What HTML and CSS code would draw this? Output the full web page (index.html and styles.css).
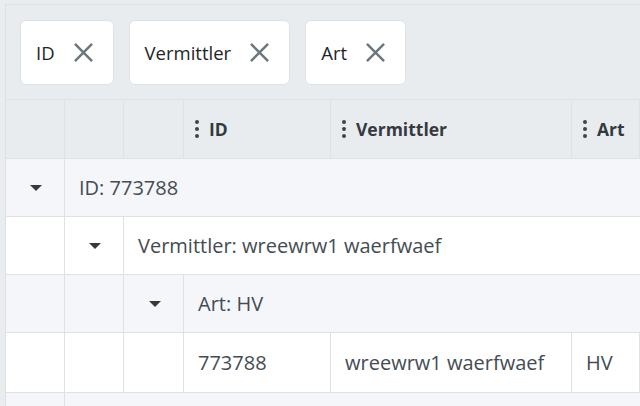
FILE: index.html
```
<!DOCTYPE html>
<html lang="en">
<head>
    <meta charset="UTF-8">
    <meta name="viewport" content="width=device-width, initial-scale=1.0">
    <title>Grid</title>
    <link rel="stylesheet" href="styles.css">
</head>
<body>

<div class="grid-wrap">
    <!-- group panel -->
    <div class="group-panel">
        <div class="chip">
            <span>ID</span>
            <svg class="chip-x" viewBox="0 0 20 20"><path d="M1 1 L19 19 M19 1 L1 19"/></svg>
        </div>
        <div class="chip">
            <span>Vermittler</span>
            <svg class="chip-x" viewBox="0 0 20 20"><path d="M1 1 L19 19 M19 1 L1 19"/></svg>
        </div>
        <div class="chip">
            <span>Art</span>
            <svg class="chip-x" viewBox="0 0 20 20"><path d="M1 1 L19 19 M19 1 L1 19"/></svg>
        </div>
    </div>

    <!-- header -->
    <div class="row header">
        <div class="cell"></div>
        <div class="cell"></div>
        <div class="cell"></div>
        <div class="cell"><span class="dots"><i></i><i></i><i></i></span>ID</div>
        <div class="cell"><span class="dots"><i></i><i></i><i></i></span>Vermittler</div>
        <div class="cell"><span class="dots"><i></i><i></i><i></i></span>Art</div>
    </div>

    <div class="row shade">
        <div class="cell toggle"><span class="caret"></span></div>
        <div class="cell span-5">ID: 773788</div>
    </div>

    <div class="row">
        <div class="cell"></div>
        <div class="cell toggle"><span class="caret"></span></div>
        <div class="cell span-4">Vermittler: wreewrw1 waerfwaef</div>
    </div>

    <div class="row shade">
        <div class="cell"></div>
        <div class="cell"></div>
        <div class="cell toggle"><span class="caret"></span></div>
        <div class="cell span-3">Art: HV</div>
    </div>

    <div class="row data">
        <div class="cell"></div>
        <div class="cell"></div>
        <div class="cell"></div>
        <div class="cell">773788</div>
        <div class="cell">wreewrw1 waerfwaef</div>
        <div class="cell">HV</div>
    </div>

    <div class="row shade">
        <div class="cell"></div>
        <div class="cell span-5"></div>
    </div>
</div>

</body>
</html>
```

FILE: styles.css
```
body {
    margin: 0;
    background-color: #eaedf0;
    font-family: 'Open Sans', 'Noto Sans', sans-serif;
    color: #434c53;
    overflow: hidden;
}

.grid-wrap {
    margin: 4px 0 0 5px;
    border-top: 1px solid #dde1e5;
    border-left: 1px solid #dde1e5;
    box-shadow: inset 1px 1px 0 #fff;
    height: 420px;
    background-color: #fff;
}

.group-panel {
    display: flex;
    gap: 15px;
    padding: 15px 14px 14px 14px;
    background-color: #e9ecef;
    border-bottom: 1px solid #dee2e6;
}

.chip {
    display: flex;
    align-items: center;
    height: 65px;
    box-sizing: border-box;
    padding: 0 20px 0 15px;
    gap: 19px;
    background-color: #fff;
    border: 1px solid #dee2e6;
    border-radius: 6px;
    font-size: 18.5px;
    color: #212529;
}

.chip-x {
    width: 19px;
    height: 19px;
    stroke: #6c777d;
    stroke-width: 2.6;
    fill: none;
}

.row {
    display: grid;
    grid-template-columns: 59px 59px 60px 147px 241px 1fr;
    height: 57px;
    border-bottom: 1px solid #dee2e6;
    font-size: 20px;
}

.row.header {
    height: 58px;
    background-color: #e9ecef;
    font-weight: 700;
    font-size: 17.5px;
    color: #343a40;
}

.row.data {
    height: 59px;
}

.row.shade {
    background-color: #f5f6f9;
}

.cell {
    display: flex;
    align-items: center;
    padding: 0 14px;
    border-right: 1px solid #dee2e6;
    white-space: nowrap;
    overflow: hidden;
}

.header .cell {
    padding-left: 11px;
}

.span-5 { grid-column: span 5; border-right: none; }
.span-4 { grid-column: span 4; border-right: none; }
.span-3 { grid-column: span 3; border-right: none; }

.toggle {
    justify-content: center;
    padding: 0;
}

.caret {
    width: 0;
    height: 0;
    border-left: 6px solid transparent;
    border-right: 6px solid transparent;
    border-top: 6px solid #343a40;
    margin-left: 2px;
}

.dots {
    display: flex;
    flex-direction: column;
    gap: 3px;
    margin-right: 10px;
}

.dots i {
    display: block;
    width: 4px;
    height: 4px;
    border-radius: 50%;
    background-color: #3d464d;
}

.row:last-child {
    border-bottom: none;
}
```
